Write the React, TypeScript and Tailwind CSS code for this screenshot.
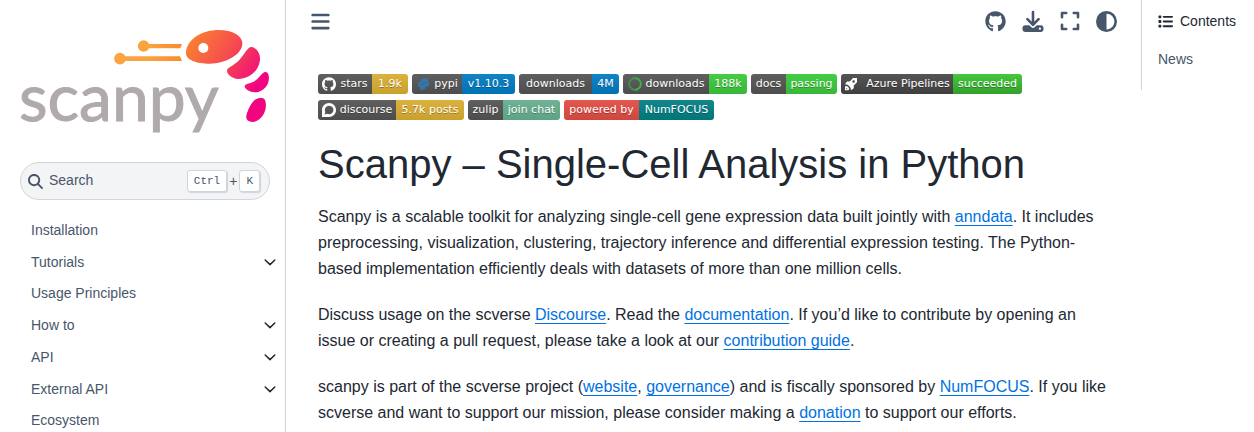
import type { ReactNode } from "react";
import { FaBars, FaCircleHalfStroke, FaGithub, FaList, FaMagnifyingGlass } from "react-icons/fa6";
import { SiDiscourse, SiGithub } from "react-icons/si";

function Logo() {
  return (
    <svg viewBox="60 60 750 330" className="block w-full" role="img" aria-label="scanpy">
      <defs>
        <linearGradient id="shrimp" gradientUnits="userSpaceOnUse" x1="540" y1="90" x2="770" y2="235">
          <stop offset="0" stopColor="#fb8a2c" />
          <stop offset="0.5" stopColor="#f6504c" />
          <stop offset="1" stopColor="#f0047f" />
        </linearGradient>
        <linearGradient id="antenna" gradientUnits="userSpaceOnUse" x1="440" y1="0" x2="550" y2="0">
          <stop offset="0" stopColor="#fba340" />
          <stop offset="1" stopColor="#fb8a2c" />
        </linearGradient>
      </defs>
      <g fill="url(#antenna)">
        <circle cx="431" cy="108" r="17.5" />
        <path d="M431 102H546L541 115H431Z" />
        <circle cx="360" cy="146" r="17.5" />
        <path d="M360 139H540L546 153H360Z" />
      </g>
      <g fill="url(#shrimp)">
        <path d="M558 125C562 85 610 60 655 60C700 60 727 78 727 100C727 135 675 161 630 161C590 161 555 150 558 125Z" />
        <path d="M755 111C775 115 783 140 779 155C774 185 745 207 715 207C695 205 681 193 681 182C681 172 700 168 716 152C735 130 745 108 755 111Z" />
        <path d="M797 186C806 187 808 200 806 212C802 235 780 247 765 247C748 246 733 237 734 228C736 221 752 221 764 213C780 202 788 184 797 186Z" />
        <path d="M786 264C797 265 799 280 797 295C793 318 775 336 758 336C744 336 737 328 739 317C743 300 752 280 765 269C772 264 780 263 786 264Z" />
      </g>
      <circle cx="610" cy="114" r="15" fill="#fff" />
      <text x="57" y="334" fontSize="198" fill="#b0aaab" stroke="#b0aaab" strokeWidth="3" fontFamily="Lato, sans-serif">
        scanpy
      </text>
    </svg>
  );
}

function ChevronDown() {
  return (
    <svg viewBox="0 0 12 8" className="h-2 w-3" fill="none" stroke="#222832" strokeWidth="1.5" strokeLinecap="round" strokeLinejoin="round" aria-hidden="true">
      <path d="M1.2 2L6 6.6L10.8 2" />
    </svg>
  );
}

function DownloadIcon() {
  return (
    <svg viewBox="0 0 22 22" className="h-[22px] w-[22px]" aria-hidden="true">
      <path d="M11 2V14M5.4 9.2L11 14.8L16.6 9.2" fill="none" stroke="currentColor" strokeWidth="2.6" strokeLinecap="round" strokeLinejoin="round" />
      <path
        fillRule="evenodd"
        fill="currentColor"
        d="M3.5 15.2H7.2L9.4 17.3Q11 18.5 12.6 17.3L14.8 15.2H18.5A3 3 0 0 1 21.5 18.2V19A3 3 0 0 1 18.5 22H3.5A3 3 0 0 1 .5 19V18.2A3 3 0 0 1 3.5 15.2ZM17.9 17.4A1.2 1.2 0 1 0 17.9 19.8A1.2 1.2 0 1 0 17.9 17.4Z"
      />
    </svg>
  );
}

function ExpandIcon() {
  return (
    <svg viewBox="0 0 20 20" className="h-5 w-5" fill="none" stroke="currentColor" strokeWidth="2.6" strokeLinecap="round" strokeLinejoin="round" aria-hidden="true">
      <path d="M2 6.2V2H6.2M13.8 2H18V6.2M18 13.8V18H13.8M6.2 18H2V13.8" />
    </svg>
  );
}

function PythonMark() {
  return (
    <svg viewBox="0 0 14 14" className="h-3.5 w-3.5" aria-hidden="true">
      <path d="M4.6 2.4L9 1L12 2V4.4L13 5V8.6L10.6 9.6L9.4 9.8V12L6.4 13L4 12.2V10.4L2 9.6V5.8L4.6 4.8Z" fill="#3775a9" />
      <path d="M4.4 8.2L7.2 6.8L11.4 5.4" fill="none" stroke="#2f6593" strokeWidth="0.8" />
    </svg>
  );
}

function DaskRing() {
  return (
    <svg viewBox="0 0 14 14" className="h-3.5 w-3.5" aria-hidden="true">
      <circle cx="7" cy="7" r="5.8" fill="none" stroke="#3eb049" strokeWidth="2" strokeDasharray="2.2 0.4" opacity="0.7" />
      <path d="M7 1.2A5.8 5.8 0 0 1 7 12.8" fill="none" stroke="#3eb049" strokeWidth="1.6" />
    </svg>
  );
}

function Rocket() {
  return (
    <svg viewBox="0 0 14 14" className="mr-1 h-3.5 w-3.5" fill="#fff" aria-hidden="true">
      <path
        fillRule="evenodd"
        d="M13 1V5.2L9.8 8.4V11.2L7 13.2L6.4 10.4L3.8 7.8L1 7.2L3 4.4H5.8L9 1ZM9.6 3.2A1.3 1.3 0 1 0 9.6 5.8A1.3 1.3 0 1 0 9.6 3.2Z"
      />
      <path d="M1 9.4L3 9L5.2 11.2L4.6 13.2H1ZM2.2 10.8V12.2H3.6Z" fillRule="evenodd" />
    </svg>
  );
}

type BadgeProps = {
  label: string;
  value: string;
  labelClass: string;
  valueClass: string;
  icon?: ReactNode;
};

function Badge({ label, value, labelClass, valueClass, icon }: BadgeProps) {
  return (
    <a
      href="#"
      className="flex h-5 overflow-hidden rounded-[3px] font-['DejaVu_Sans',sans-serif] text-[11px] leading-5 whitespace-nowrap text-white [text-shadow:0_1px_0_rgba(1,1,1,0.3)]"
    >
      <span className={`flex items-center justify-center gap-1 bg-linear-to-b ${labelClass}`}>
        {icon}
        {label}
      </span>
      <span className={`flex items-center justify-center bg-linear-to-b ${valueClass}`}>{value}</span>
    </a>
  );
}

const badgeRows: BadgeProps[][] = [
  [
    { label: "stars", value: "1.9k", labelClass: "w-[54px] from-[#5f5f5f] to-[#4d4d4d]", valueClass: "w-[36px] from-[#dcb23f] to-[#c9a02d]", icon: <SiGithub size={14} /> },
    { label: "pypi", value: "v1.10.3", labelClass: "w-[50px] from-[#5f5f5f] to-[#4d4d4d]", valueClass: "w-[53px] from-[#1283c6] to-[#0071b2]", icon: <PythonMark /> },
    { label: "downloads", value: "4M", labelClass: "w-[73px] from-[#5f5f5f] to-[#4d4d4d]", valueClass: "w-[27px] from-[#1283c6] to-[#0071b2]" },
    { label: "downloads", value: "188k", labelClass: "w-[86px] from-[#5f5f5f] to-[#4d4d4d]", valueClass: "w-[38px] from-[#44cc44] to-[#38b838]", icon: <DaskRing /> },
    { label: "docs", value: "passing", labelClass: "w-[35px] from-[#5f5f5f] to-[#4d4d4d]", valueClass: "w-[51px] from-[#44cc44] to-[#38b838]" },
    { label: "Azure Pipelines", value: "succeeded", labelClass: "w-[112px] from-[#555555] to-[#3f3f3f]", valueClass: "w-[69px] from-[#44c83c] to-[#339f2c]", icon: <Rocket /> },
  ],
  [
    { label: "discourse", value: "5.7k posts", labelClass: "w-[78px] from-[#5f5f5f] to-[#4d4d4d]", valueClass: "w-[68px] from-[#dcb23f] to-[#c9a02d]", icon: <SiDiscourse size={14} /> },
    { label: "zulip", value: "join chat", labelClass: "w-[35px] from-[#5f5f5f] to-[#4d4d4d]", valueClass: "w-[57px] from-[#6fb397] to-[#5ea286]" },
    { label: "powered by", value: "NumFOCUS", labelClass: "w-[75px] from-[#e2584f] to-[#cf463d]", valueClass: "w-[75px] from-[#12868b] to-[#00757a]" },
  ],
];

const navItems = [
  { label: "Installation", nested: false },
  { label: "Tutorials", nested: true },
  { label: "Usage Principles", nested: false },
  { label: "How to", nested: true },
  { label: "API", nested: true },
  { label: "External API", nested: true },
  { label: "Ecosystem", nested: false },
];

function TextLink({ children }: { children: ReactNode }) {
  return (
    <a href="#" className="text-[#0072e3] underline decoration-1 underline-offset-[3px]">
      {children}
    </a>
  );
}

function Key({ children }: { children: ReactNode }) {
  return (
    <kbd className="rounded-[3px] border border-[#d1d5da] bg-white px-1.5 font-['Liberation_Mono',monospace] text-[11px] leading-5 shadow-[1px_1px_1px_#d1d5da]">
      {children}
    </kbd>
  );
}

export default function App() {
  return (
    <div className="flex h-screen overflow-hidden bg-white font-['Liberation_Sans',Arial,sans-serif] text-[#222832]">
      <aside className="w-[286px] shrink-0 border-r border-[#d1d5da] pt-[30px]">
        <a href="#" className="mr-[15px] ml-5 block">
          <Logo />
        </a>
        <div className="mt-[22px] pr-[15px] pl-5">
          <button type="button" className="flex h-[38px] w-full items-center rounded-full border border-[#d1d5da] bg-[#f3f4f5] pr-[9px] pl-[7px] text-[14px] leading-5 text-[#48566b]">
            <FaMagnifyingGlass size={15} aria-hidden="true" />
            <span className="ml-1.5 pb-0.5">Search</span>
            <span className="ml-auto flex items-center gap-0.5">
              <Key>Ctrl</Key>+<Key>K</Key>
            </span>
          </button>
        </div>
        <nav aria-label="Section navigation" className="mt-[15px] pr-[9px] pl-[31px] text-[14px] text-[#48566b]">
          <ul>
            {navItems.map((item) => (
              <li key={item.label} className={item.nested ? "flex h-8 items-center justify-between" : "flex h-[31px] items-center"}>
                <a href="#">{item.label}</a>
                {item.nested && (
                  <button type="button" aria-label={`Expand ${item.label}`}>
                    <ChevronDown />
                  </button>
                )}
              </li>
            ))}
          </ul>
        </nav>
      </aside>

      <main className="min-w-0 flex-1 px-8">
        <header className="-mx-2 flex h-[42px] items-center justify-between text-[#48566b]">
          <button type="button" aria-label="Toggle navigation">
            <FaBars size={21} />
          </button>
          <div className="flex items-center gap-4">
            <a href="#" aria-label="GitHub">
              <FaGithub size={21} />
            </a>
            <button type="button" aria-label="Download">
              <DownloadIcon />
            </button>
            <button type="button" aria-label="Fullscreen">
              <ExpandIcon />
            </button>
            <button type="button" aria-label="Colour theme">
              <FaCircleHalfStroke size={21} />
            </button>
          </div>
        </header>

        <article>
          <div className="mt-8 flex flex-col gap-1.5">
            {badgeRows.map((row, index) => (
              <div key={index} className="flex gap-1">
                {row.map((badge) => (
                  <Badge key={badge.label + badge.value} {...badge} />
                ))}
              </div>
            ))}
          </div>
          <h1 className="mt-5 text-[40px] leading-[48px]">Scanpy – Single-Cell Analysis in Python</h1>
          <div className="mt-4 flex flex-col gap-5 text-base leading-[26px]">
            <p>
              Scanpy is a scalable toolkit for analyzing single-cell gene expression data built jointly with <TextLink>anndata</TextLink>. It
              includes preprocessing, visualization, clustering, trajectory inference and differential expression testing. The Python-based
              implementation efficiently deals with datasets of more than one million cells.
            </p>
            <p>
              Discuss usage on the scverse <TextLink>Discourse</TextLink>. Read the <TextLink>documentation</TextLink>. If you’d like to
              contribute by opening an issue or creating a pull request, please take a look at our{" "}
              <TextLink>contribution guide</TextLink>.
            </p>
            <p>
              scanpy is part of the scverse project (<TextLink>website</TextLink>, <TextLink>governance</TextLink>) and is fiscally sponsored
              by <TextLink>NumFOCUS</TextLink>. If you like scverse and want to support our mission, please consider making a{" "}
              <TextLink>donation</TextLink> to support our efforts.
            </p>
          </div>
        </article>
      </main>

      <aside className="h-[90px] w-[113px] shrink-0 border-l border-[#d1d5da] pt-3 pl-4 text-[14px]">
        <h2 className="flex items-center gap-[7px] leading-[18px]">
          <FaList size={15} aria-hidden="true" />
          Contents
        </h2>
        <a href="#" className="mt-5 block leading-[18px] text-[#48566b]">
          News
        </a>
      </aside>
    </div>
  );
}
